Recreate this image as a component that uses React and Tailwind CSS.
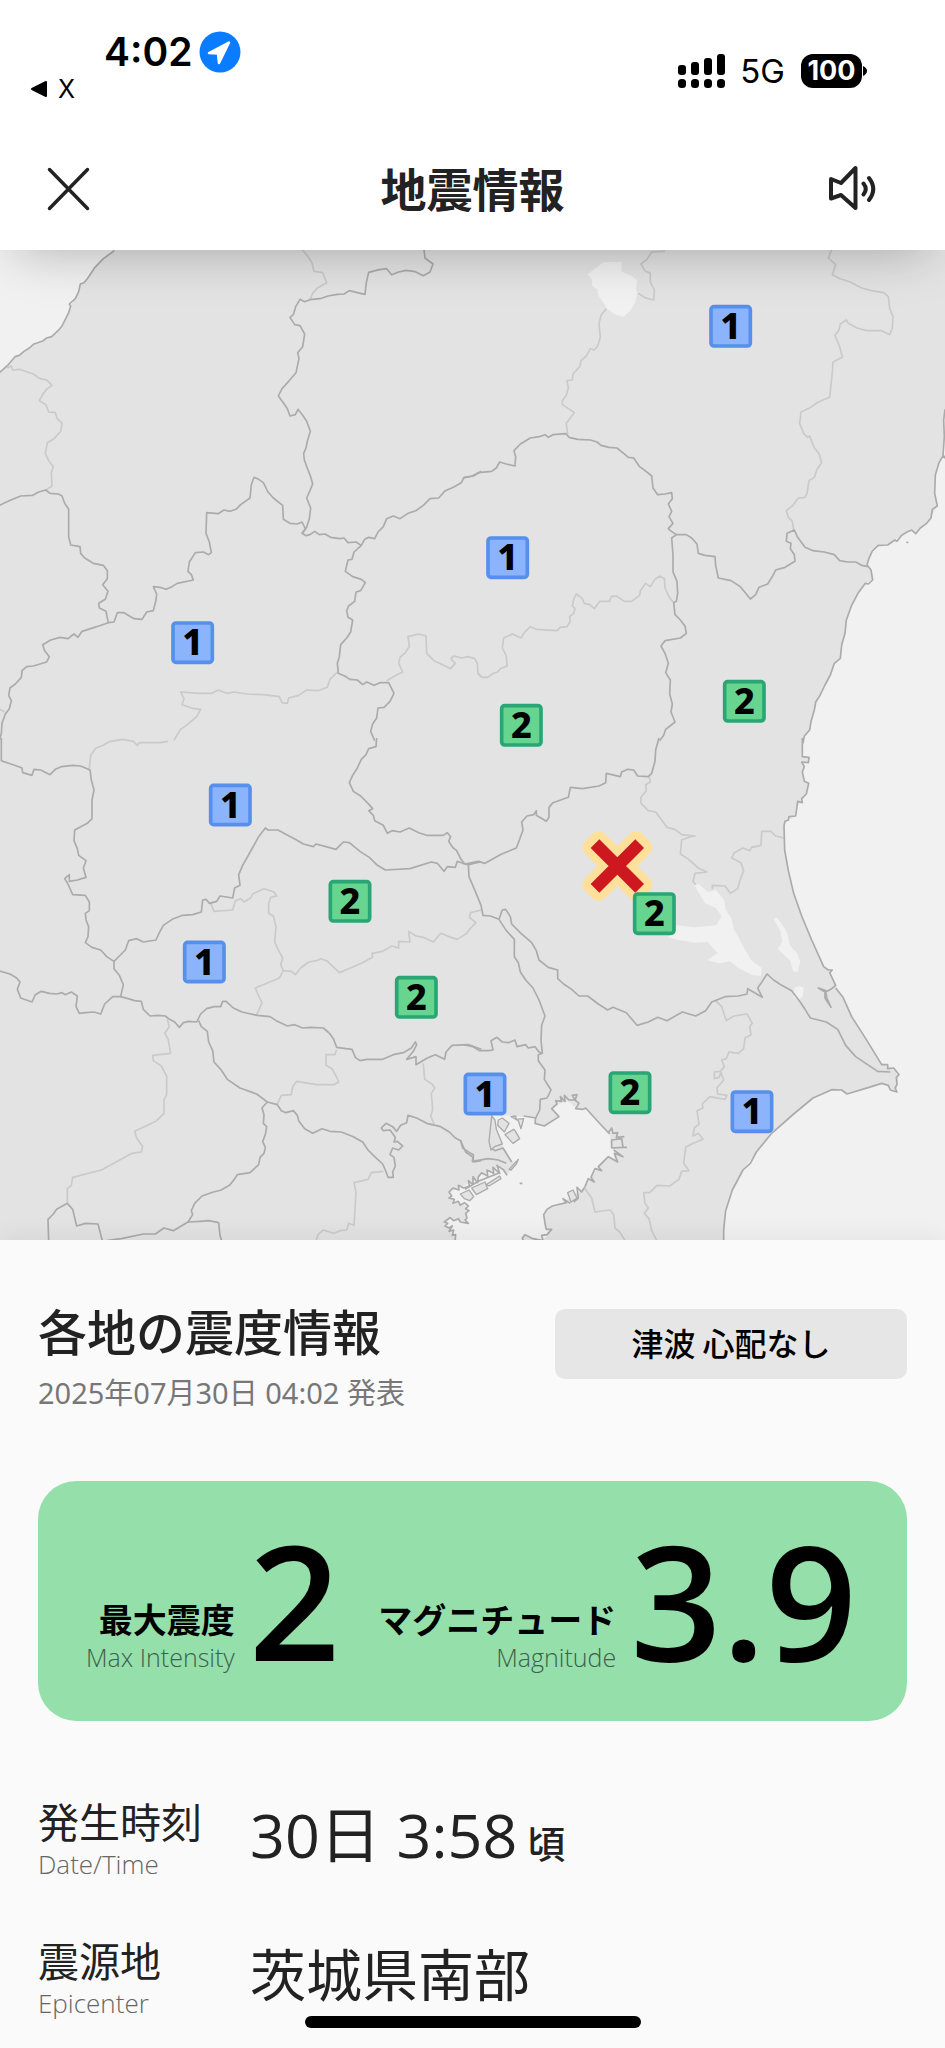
const JP = "font-['Noto_Sans_CJK_JP',sans-serif]";
const LATIN = "font-['Open_Sans','Noto_Sans_CJK_JP',sans-serif]";

/* Water areas, one list per quadrant of the map. */
const water = {
  nw: ["M-10 -10H360L343 32L310 56L285 82L262 116L241 132L236 155L212 198L196 238L178 268L155 290L128 303L100 313L72 334L45 350L22 377L-10 405Z"],
  ne: [
    "M1460 500L1437 540L1436 640L1422 668L1411 705L1409 760L1417 798L1402 824L1398 834L1384 851L1366 864L1352 881L1332 869L1310 886L1290 900L1268 915L1240 916L1222 933L1212 955L1208 980L1218 990L1223 1020L1201 1030L1180 1058L1160 1096L1144 1140L1140 1180L1130 1215L1126 1255L1108 1270L1096 1305L1080 1335L1064 1368L1048 1410L1038 1445L1034 1470L1018 1494L1014 1510H1460Z",
    "M368 103L416 66H470L469 94L498 107L517 121L513 146L517 160L510 188L495 213L476 230L452 224L427 208L414 186L399 165L397 148L382 139L380 118Z",
  ],
  se: [
    "M1014 -10L1012 50L1032 52L1030 68L1018 70L1012 96L1020 124L1031 130L1024 162L1006 186L996 200L992 228L972 238L957 256L959 330L970 392L986 460L1010 528L1040 600L1076 680L1090 688L1110 732L1150 810L1190 880L1248 968L1290 992L1300 1010L1294 1056L1276 1048L1256 1030L1212 1042L1146 1062L1130 1050L1100 1049L1044 1074L986 1122L920 1180L874 1236L834 1290L802 1350L782 1412L776 1470V1520H1460V-10Z",
    "M82 1124L150 1128L175 1130L212 1134L210 1150L238 1158L282 1130L260 1106L276 1092L310 1084L336 1108L362 1104L400 1146L434 1182L438 1222L452 1234L446 1256L426 1250L398 1284L376 1318L360 1340L310 1376L282 1396L248 1406L236 1424L240 1464L258 1474L232 1502L205 1498L176 1486L170 1510H-30L-30 1485L-50 1473L-40 1460L-55 1463L-62 1450L-45 1435L-15 1443L10 1450L2 1425L10 1410L-5 1390L-30 1387L-48 1370L-45 1355L-20 1345L20 1326L50 1306L84 1290L104 1276L126 1306L158 1262L140 1266L112 1216L104 1200L90 1160Z",
    "M688 436L700 432L730 456L752 450L778 480L782 510L800 536L806 566L830 610L858 660L890 684L888 708L860 704L820 684L794 664L764 670L726 660L758 640L728 606L690 608L640 600L608 592L634 556L688 562L754 556L770 528L752 504L720 490Z",
    "M926 536L936 532L956 560L968 582L974 616L996 640L1006 664L998 696L984 694L976 664L952 640L938 626L952 606L946 574Z",
    "M988 744L1004 738L1016 744L1014 768L1000 782L986 770Z",
  ],
  sw: [],
};

/* Reclaimed islands and piers inside the bay. */
const islands = [
  "M80 1128L72 1204L78 1230L88 1220L112 1212L94 1168L90 1140Z",
  "M100 1140L112 1134L132 1150L118 1176L98 1156Z",
  "M120 1184L146 1168L150 1172L164 1196L144 1210Z",
  "M138 1130L152 1128L154 1138L176 1136L168 1166L160 1142Z",
  "M20 1344L60 1326L68 1346L34 1364Z",
  "M64 1334L104 1308L108 1316L72 1338Z",
  "M-14 1362L12 1350L26 1370L14 1382L-2 1376Z",
  "M132 1288L160 1258L154 1272L138 1290Z",
  "M308 1358L324 1350L336 1374L318 1386Z",
];

/* Prefecture borders and coastlines. */
const borders = {
  nw: [
    "M343 32L310 56L285 82L270 104L262 116L252 128L241 132L236 155L226 176L208 192L212 198L206 218L196 238L186 258L178 268L155 290L140 294L128 303L100 313L88 324L72 334L58 346L45 350L22 377L-10 405",
    "M1272 30L1275 54L1299 72L1290 96L1270 107L1246 95L1218 91L1196 96L1175 104L1160 86L1138 89L1106 97L1099 128L1095 163L1072 158L1048 152L1032 162L1012 163L984 168L960 176L930 179L914 185L900 178L887 200L880 224L870 232L884 254L900 257L914 282L908 320L893 338L897 356L888 398L866 424L846 446L835 468L850 488L862 506L870 528L886 524L894 508L908 526L920 544L931 574L922 604L918 624L911 640L913 660L924 690L932 710L938 732L930 752L920 774L932 804L928 836L920 862L908 880",
    "M-4 797L24 784L62 768L98 766L116 756L137 750L150 760L176 762L186 768L194 790L206 808V890L212 915L240 920L242 940L254 954L280 970L310 976L322 992V1016L308 1034L324 1054L316 1078L296 1090L298 1104L318 1114L325 1148L342 1146L352 1118L372 1118L402 1136L426 1138L440 1116L460 1112L468 1080L470 1062L460 1040L480 1042L498 1048L516 1040L532 1030L580 1020L574 1004L564 994L568 966L586 938L610 936L626 944L634 938L628 906L618 880L620 818L654 821L672 810L690 814L708 808L722 794L750 774L754 734L762 712L776 718L790 728L804 756L820 774L848 796L850 838L870 850L892 852L906 846L916 866L906 880L918 887L930 884L944 874L958 884L975 882L992 892L1020 896L1032 894L1044 908L1068 906L1084 916L1094 898L1106 892L1124 896L1134 876L1150 860L1160 836L1180 828L1200 836L1224 820L1248 812L1270 796L1290 776L1316 774L1336 752L1360 742L1384 728L1392 712L1420 708L1444 694",
    "M325 1148L290 1160L246 1174L234 1192L222 1182L204 1196L180 1192L152 1200L128 1214L134 1232L148 1250L140 1266L100 1278L80 1280L66 1292L64 1312L46 1332L30 1344L26 1366L34 1382L28 1406L16 1422L6 1450L4 1480L-4 1510",
    "M1084 916L1062 936L1056 958L1044 960L1036 994L1058 1010L1084 1018L1096 1028L1082 1052L1068 1056L1064 1084L1046 1098L1040 1112L1044 1132L1058 1140L1052 1176L1040 1194L1022 1214L1018 1250L1012 1270L1015 1300L1034 1308L1050 1318L1072 1320L1088 1334L1100 1326L1122 1336L1140 1328L1166 1328L1182 1360L1170 1384L1152 1402L1134 1404L1130 1434L1118 1452L1112 1474L1124 1502",
  ],
  ne: [
    "M-4 714L22 708L40 698L80 694L94 684L104 666L124 672L150 678L152 650L147 632L166 612L196 594L222 590L240 584L250 592L264 584L303 581L312 592L338 598L376 600L396 606L408 616L432 622L456 624L476 640L490 652L506 654L524 680L548 698L560 708L564 744L578 764L600 762L620 758L622 776L610 792L620 814L612 830L624 850L610 866L616 872L634 884L620 894L624 944L624 996L636 1024L638 1060L634 1084L626 1088L630 1124L646 1140L660 1158L664 1180L646 1194L600 1202L588 1218L600 1240L610 1270L602 1298L616 1320L614 1362L622 1392L618 1416L630 1446L602 1468L596 1486L584 1502",
    "M634 884L664 884L680 894L696 912L700 940L720 946L750 950L752 976L760 1014L798 1022L826 1040L842 1060L856 1077L872 1064L882 1042L908 1032L924 1006L932 990L960 982L990 964L988 944L976 926L978 910L964 904L966 880L988 870L998 892L1020 922L1044 932L1078 936L1108 944L1124 962L1148 966L1172 966L1190 976L1208 980",
    "M1440 508L1436 540L1438 590L1434 645L1442 656M1436 645L1422 668L1411 705L1409 760L1417 798L1402 808L1398 834L1384 851L1366 864L1352 881L1340 870L1326 876L1310 886L1296 904L1290 900L1268 915L1240 916L1222 933L1212 955L1206 974L1218 990L1223 1020L1210 1032L1201 1030L1180 1058L1160 1096L1144 1140L1140 1180L1130 1215L1126 1255L1108 1270L1096 1305L1080 1335L1064 1368L1052 1386L1048 1410L1038 1445L1034 1470L1018 1488L1014 1510",
    "M1324 906L1330 908",
  ],
  sw: [
    "M4 -6V62L26 70L44 76L66 84L68 98L96 106L102 88L122 90L150 104L166 88L184 80L218 76L242 78L270 90L274 120L282 150L276 180L276 236L262 250L224 270L222 302L232 326L236 346L258 362L250 384L258 412L232 420L208 424L208 404L194 416L204 432L218 464L256 466L268 486L268 512L256 520L258 540L266 560L264 590L256 608L276 622L302 630L320 650L342 664L342 686L358 706L370 734L362 770L384 776L404 782L424 784L430 808L450 828L474 826L496 828L506 836L524 846L538 862L550 848L566 844L590 846L602 822L620 806L642 800L662 800L668 784L678 784L700 804L726 816L772 826L810 830L832 844L862 858L884 854L908 864L932 862L970 864L984 876L990 882L1000 896L1010 922L1038 926L1056 928L1066 952L1080 962L1100 958L1148 958L1180 944L1210 938L1234 924L1246 906L1250 914L1240 934L1220 958L1248 950V974L1282 954L1306 944L1334 958L1338 936L1356 916L1406 914L1444 928",
    "M-4 692L30 702L50 714L60 726L52 748L62 774L96 786L106 764L124 754L148 760L170 762L186 758L196 764L214 756L232 768L228 800L238 820L256 818L282 816L302 822L314 792L338 770L362 770",
    "M342 664L364 642L376 630L386 602L410 596L430 606L468 600L478 578L490 556L520 536L548 526L578 524L604 516L608 480L618 478L628 490L650 484L660 468L698 474L704 444L720 436L716 404L728 376L754 330L776 290L796 264L804 270L834 270L860 284L886 298L910 312L940 320L948 312L986 322L1008 328L1030 306L1048 308L1080 334L1108 352L1130 374L1156 390L1230 386L1294 366L1312 370L1332 394L1342 380L1366 382L1372 364L1388 370L1406 374L1440 366",
    "M1130 -6L1128 20L1106 26L1098 44L1084 58L1072 84L1058 106L1048 128L1060 154L1082 168L1104 190L1118 206L1106 212L1120 226L1124 242L1150 256L1162 280L1176 272L1200 276L1228 264L1256 278L1280 286L1330 286L1342 278L1352 290L1346 304L1358 322L1370 332L1382 356L1394 372",
    "M596 842L604 860L622 874L626 906L638 932L642 966L662 988L682 1018L720 1044L770 1062L802 1086L786 1104L792 1124L790 1150L800 1160L796 1184L788 1204L796 1222L792 1240L780 1252L776 1274L750 1298L712 1304L700 1322L688 1336L664 1350L640 1356L606 1368L584 1390L574 1412L578 1424L564 1446L520 1472L492 1464L466 1482L430 1482L364 1496L320 1502",
    "M564 1446L600 1444L626 1442L656 1448L660 1486L666 1506",
    "M802 1086L832 1094L844 1112L858 1118L880 1112L892 1126L896 1142L914 1166L938 1180L966 1166L990 1174L1024 1176L1060 1190L1088 1206L1104 1230L1124 1250L1148 1272L1156 1290L1164 1312H1180L1178 1296L1186 1278L1182 1252L1170 1244L1178 1224L1196 1230L1208 1218L1192 1204L1182 1206L1186 1192L1170 1170L1150 1172L1144 1164L1158 1150L1178 1160L1190 1174L1202 1156L1220 1148L1224 1126L1250 1134L1280 1150L1322 1160L1348 1176L1366 1194L1382 1202L1388 1224L1412 1240L1420 1244V1266L1444 1262",
    "M146 1504L144 1438L160 1422L170 1408L202 1390L218 1408L230 1458L256 1450L294 1452L308 1506",
  ],
  se: [
    "M582 -6L572 30L570 64L560 100L550 110L518 108L506 90L488 88L470 96L466 110L424 100L422 128L402 138L352 146L316 142L310 172L264 188L252 202V232L244 244L214 226V212L206 224L186 228L170 246L174 270L164 298L154 324L110 342L60 370L40 364L0 372M10 374L12 410L30 452L48 496L54 526L76 528L102 538L112 510L122 508L136 530L140 552L168 580L200 608L214 632L222 660L250 682L278 690V716L296 732L320 748L342 768L368 768L400 792L428 810L444 802L484 818L516 856L550 846L578 832L606 842L652 816L692 828L722 812L740 786L780 770L820 768L846 762L848 746L892 772L878 744L888 730L906 702L926 720L950 736L980 752L1004 784L1020 808L1036 834L1084 846L1118 868L1142 916L1172 950L1238 994L1276 996",
    "M102 538L124 572L148 598V650L160 668L166 696L182 720L204 744L222 780L240 828L230 856L228 900L232 940L220 944V962L240 990L238 1018L258 1050L246 1074L226 1078L224 1110L212 1134",
    "M-4 914L24 920L44 932H70L84 930L78 902L96 892L112 906L130 908L150 900L156 920L182 914L190 924L210 920L222 936L232 940",
    "M1012 -6V50L1032 52L1030 68L1010 66L1018 80L1012 96L1018 124L1031 130L1024 162L1010 176L1012 188L998 184L996 200L992 228L972 230L970 240L960 244L957 256L959 330L970 392L986 460L1010 528L1040 600L1076 680L1090 690L1102 690L1094 698L1112 736L1100 746L1082 756L1086 776L1098 802L1080 774V756L1060 744L1084 752M1112 744L1134 772L1160 830L1206 902L1250 974L1268 974V986L1286 984L1302 1004L1294 1012L1296 1034L1290 1044L1296 1056L1276 1050L1270 1036L1250 1030L1212 1042L1146 1062L1130 1050L1100 1049L1044 1074L986 1122L920 1180L874 1236L856 1270L834 1290L802 1350L782 1412L776 1470V1508",
    "M176 1128L212 1134L210 1150L238 1158L282 1130L260 1106L276 1092L272 1082L290 1084L286 1070L300 1084L298 1066L312 1080H330L322 1066L336 1064L330 1080L342 1090L332 1106L354 1108L362 1104L400 1146L434 1182M430 1178L440 1164L444 1180L458 1178L454 1192L478 1190M440 1200L470 1196L474 1222L440 1224ZM474 1222H486M446 1230L474 1250L448 1240L458 1266L430 1250L418 1262L400 1280L410 1292L390 1286L378 1312L388 1326L370 1316L360 1340",
    "M360 1340L350 1356L336 1342L340 1374L326 1386M316 1390L294 1376L304 1388L262 1398L246 1408L236 1424L240 1450L244 1468H260L246 1484L230 1486L234 1502L204 1496L180 1484L172 1494L176 1506M164 1330H172",
    "M78 1224L90 1232L114 1224L140 1266M126 1306L116 1290L96 1276L104 1300L84 1282L86 1300L66 1290L68 1308L50 1298L40 1310L38 1328L24 1310V1334L10 1322L14 1340M0 1348L40 1324L100 1300",
    "M-14 1200L2 1236L24 1252L22 1264L70 1256L100 1260L124 1270",
    "M14 1338L-4 1344L-20 1336L-18 1350L-36 1344L-48 1356L-40 1368L-48 1374L-32 1378L-36 1390L-20 1384L-14 1396L-2 1388L10 1398L2 1406L12 1412L2 1420L6 1434L0 1440L10 1450L-14 1446L-20 1436L-34 1442L-45 1433L-62 1446L-52 1450L-60 1458L-48 1464L-38 1458L-48 1474L-34 1470L-38 1486L-28 1484L-30 1508",
  ],
};

/* Boundaries between forecast areas inside a prefecture. */
const districts = {
  nw: [
    "M906 28L924 50L936 68L942 94L968 98L980 128L952 144L938 160L930 179",
    "M22 384L34 378L38 390L58 388L100 402L120 416L140 420L156 436L142 446L130 460L118 482L138 494L146 516L166 518L172 536L186 550L182 574L162 596L142 608L136 640L146 662L160 680L154 698L156 738L137 750",
    "M1012 1296L990 1318L982 1342L954 1352L920 1350L896 1366L866 1374L862 1390L846 1388L838 1370L790 1364L740 1362L702 1356L680 1360L654 1350L636 1360L600 1360L542 1356L552 1376L546 1394L582 1406L602 1408L590 1430L562 1454L542 1468L522 1500",
    "M1160 1322L1184 1308L1208 1296L1196 1270L1200 1252L1216 1238L1228 1218L1224 1190L1256 1182L1278 1188L1280 1240L1302 1262L1328 1274L1352 1286L1366 1270L1352 1256L1362 1248L1386 1254L1404 1250L1424 1256L1432 1270L1434 1300L1446 1312",
    "M-4 1406L14 1416",
  ],
  ne: [
    "M600 34L560 36L546 58L528 72L540 92L556 100L556 126L568 150L566 180L542 174L520 160",
    "M424 206L408 226L402 250L406 292L398 318L388 330L376 326L364 348L348 362L344 380L324 402L322 420L306 422L310 444L304 466L292 482L292 494L314 508L328 518L316 534L304 550L308 582",
    "M1100 30L1090 54L1112 74L1102 104L1126 116L1156 126L1190 144L1220 152L1256 158L1270 170L1274 206L1284 230L1282 264L1274 284L1250 272L1206 272L1176 264L1150 250L1144 240L1126 252L1122 270L1110 286L1124 320L1132 352L1104 366L1102 396L1094 472L1060 486L1034 504L1008 516L1004 550L1016 580L1028 592L1034 588L1048 624L1062 640L1070 668L1056 688L1048 712L1032 722L1026 760L1020 772L1000 774L984 796L964 812L970 832L982 844L986 870",
    "M50 1312H68L84 1300L98 1296L106 1286L126 1278L124 1248L112 1224L116 1194L142 1182L168 1194L178 1178L196 1160L214 1168L276 1172L286 1162L306 1160L316 1144L314 1130L326 1120L330 1106L322 1098L326 1078L334 1062L352 1076L358 1090L374 1094L388 1106L404 1084H434L438 1070L454 1068L478 1084H500L524 1066L526 1052L542 1030L556 1040L570 1018L584 1008L598 1016L600 1044L612 1070L626 1088M50 1312L39 1300",
  ],
  sw: [
    "M504 4L480 8L418 8L412 16L400 4L370 -2L330 4L310 16L288 24L272 46L268 88",
    "M632 490L642 514L698 510L706 482L722 476L732 486L752 474L758 462L792 446L822 456L830 468L812 472L806 490L806 520L820 528L828 560L824 606L834 628L848 654L842 674L850 692L838 714L766 744L776 768L786 788L776 812L770 824",
    "M850 692L874 694L886 704L902 684L926 666L950 662L962 656L980 662L1018 698L1046 686L1084 670L1118 652L1116 640L1148 634L1176 618L1196 624V604L1230 606L1226 574L1248 588L1270 592L1300 606L1322 580L1352 592L1372 598L1400 580L1412 564L1428 548L1408 532L1412 518L1444 510",
    "M502 838L508 860L494 880L504 896L512 940L458 946L460 962L484 978L500 1008L500 1064L492 1080V1120L470 1142L446 1154L404 1174L410 1194L428 1220L424 1236L396 1240L344 1268L304 1290L218 1312L214 1336L202 1346V1388",
    "M1010 930L1004 944L978 944V976L996 986L1008 1008L1016 1026L1002 1034L950 1034L890 1024L878 1040L874 1064L844 1066L832 1092",
    "M1270 970L1274 1018L1296 1032L1304 1044L1294 1060L1298 1110L1292 1128L1302 1152",
    "M1150 1294L1114 1298L1104 1318L1062 1328L1068 1358L1062 1456L1046 1450L1040 1470L1020 1472L1002 1480L970 1470L954 1484L948 1504",
  ],
  se: [
    "M552 108L556 126L542 134L544 152L528 172V190L550 212L572 216L590 240L606 262L630 268L650 284L690 288L676 290L650 300L646 342L668 356L700 384L726 396L690 400L684 424L692 434",
    "M956 294L932 288L918 274H890L888 316L860 322L854 332L834 324L808 338L800 354L828 368L836 392L824 424L818 446L796 460L780 438L742 436V448",
    "M752 782L770 800L784 842L806 828L846 822L862 850L854 860L858 884L840 894L836 926L820 940L792 936L784 956L770 960L778 980L766 994L748 996V1016L762 1012L768 998L776 1020L756 1044L758 1062L786 1066L780 1078L734 1070L712 1092L714 1104L696 1112L702 1152L688 1164L684 1188L700 1180L714 1198L680 1212L662 1222L656 1270L672 1292L650 1294L642 1318L614 1338L576 1336L554 1358H536L540 1390L550 1404L538 1420L552 1436L560 1472L576 1502",
    "M360 1346L380 1374L390 1416L436 1410L446 1424L450 1464L464 1476L482 1504",
  ],
};

const quadrants = [
  ["nw", "translate(0 -30)"],
  ["ne", "translate(1395 -30)"],
  ["sw", "translate(0 1470)"],
  ["se", "translate(1395 1470)"],
];

const markers = [
  { level: 1, x: 2192, y: 229 },
  { level: 1, x: 1523, y: 923 },
  { level: 1, x: 578, y: 1178 },
  { level: 2, x: 2233, y: 1354 },
  { level: 2, x: 1564, y: 1426 },
  { level: 1, x: 691, y: 1665 },
  { level: 2, x: 1050, y: 1954 },
  { level: 2, x: 1963, y: 1991 },
  { level: 1, x: 613, y: 2136 },
  { level: 2, x: 1249, y: 2242 },
  { level: 1, x: 1455, y: 2532 },
  { level: 2, x: 1890, y: 2528 },
  { level: 1, x: 2256, y: 2585 },
];

function IntensityMarker({ level, x, y }) {
  const tone = level === 1 ? "fill-[#8bb4fd] stroke-[#5690ec]" : "fill-[#67d58f] stroke-[#2aa676]";
  return (
    <g transform={`translate(${x} ${y})`}>
      <rect x="-59" y="-59" width="118" height="118" rx="9" strokeWidth="11" className={tone} />
      <text y="38" textAnchor="middle" className="fill-black font-['Noto_Sans',sans-serif] text-[108px] font-extrabold">
        {level}
      </text>
    </g>
  );
}

function IntensityMap() {
  return (
    <svg viewBox="0 0 2835 2970" role="img" aria-label="震度マップ" className="block w-full bg-[#e3e3e3]">
      {quadrants.map(([id, move]) => (
        <g key={id} transform={move} className="fill-[#f1f1f1]">
          {water[id].map((d) => <path key={d} d={d} />)}
        </g>
      ))}
      {quadrants.map(([id, move]) => (
        <g key={id} transform={move} fill="none" strokeLinejoin="round">
          <g strokeWidth="5" className="stroke-[#cacaca]">
            {districts[id].map((d) => <path key={d} d={d} />)}
          </g>
          <g strokeWidth="5" className="stroke-[#ababab]">
            {borders[id].map((d) => <path key={d} d={d} />)}
          </g>
        </g>
      ))}
      <g transform="translate(1395 1470)" strokeWidth="4" strokeLinejoin="round" className="fill-[#e3e3e3] stroke-[#ababab]">
        {islands.map((d) => <path key={d} d={d} />)}
      </g>
      <g transform="translate(1852 1848)">
        <path
          d="M-56 -80L0 -24L56 -80L80 -56L24 0L80 56L56 80L0 24L-56 80L-80 56L-24 0L-80 -56Z"
          strokeWidth="50"
          strokeLinejoin="round"
          className="fill-[#ffe09a] stroke-[#ffe09a]"
        />
        <path d="M-67 -67L67 67M67 -67L-67 67" strokeWidth="37" className="stroke-[#cd1820]" />
      </g>
      {markers.map((m) => <IntensityMarker key={`${m.x}-${m.y}`} {...m} />)}
    </svg>
  );
}

function StatusBar() {
  return (
    <div className="flex h-[112px] items-start justify-between pt-[31px] pr-[78px] pl-[30px] font-['Inter',sans-serif] text-black">
      <div>
        <div className="flex items-center gap-[7px] pl-[74px]">
          <span className="text-[39px] leading-[42px] font-semibold">4:02</span>
          <svg viewBox="0 0 42 42" className="size-[42px]" aria-hidden="true">
            <circle cx="21" cy="21" r="20.5" className="fill-[#0a7cff]" />
            <path d="M10 22L30 11.5L20 32L19 22.500Z" strokeWidth="2.500" strokeLinejoin="round" className="fill-white stroke-white" />
          </svg>
        </div>
        <a href="#back" className="flex items-center gap-[10px] text-[25px] leading-[32px]">
          <svg viewBox="0 0 18 18" className="size-[18px]" aria-hidden="true">
            <path d="M2 9L16 2V16Z" strokeWidth="2" strokeLinejoin="round" className="fill-black stroke-black" />
          </svg>
          X
        </a>
      </div>
      <div className="flex items-center pt-[23px]">
        <svg viewBox="0 0 48 34" className="h-[34px] w-[48px]" aria-hidden="true">
          <rect x="0" y="11" width="8" height="10" rx="3" />
          <rect x="13" y="8" width="8" height="13" rx="3" />
          <rect x="26" y="4" width="8" height="17" rx="3" />
          <rect x="39" y="0" width="8" height="21" rx="3" />
          <rect x="0" y="25" width="8" height="9" rx="3.500" />
          <rect x="13" y="25" width="8" height="9" rx="3.500" />
          <rect x="26" y="25" width="8" height="9" rx="3.500" />
          <rect x="39" y="25" width="8" height="9" rx="3.500" />
        </svg>
        <span className="ml-[14px] text-[33px] leading-[34px]">5G</span>
        <span className="ml-[16px] flex h-[34px] w-[61px] items-center justify-center rounded-[12px] bg-black text-[27px] leading-[34px] font-bold text-white">
          100
        </span>
        <svg viewBox="0 0 4 10" className="ml-[1px] h-[10px] w-[4px]" aria-hidden="true">
          <path d="M0 0Q4 2 4 5T0 10Z" />
        </svg>
      </div>
    </div>
  );
}

function AppBar() {
  return (
    <div className="grid grid-cols-[1fr_auto_1fr] items-center pt-[50px] pr-[68px] pb-[34px] pl-[44px] text-[#222]">
      <button type="button" aria-label="閉じる" className="size-[50px]">
        <svg viewBox="0 0 50 50" className="size-full" fill="none" stroke="currentColor" strokeWidth="3.500" strokeLinecap="round" aria-hidden="true">
          <path d="M5.500 5.500L43.500 44.500M43.500 5.500L5.500 44.500" />
        </svg>
      </button>
      <h1 className={`${JP} pb-[4px] pl-[24px] text-[46px] leading-[50px] font-bold`}>地震情報</h1>
      <button type="button" aria-label="音声" className="size-[50px] justify-self-end">
        <svg viewBox="0 0 50 50" className="size-full" fill="none" stroke="currentColor" strokeWidth="4" strokeLinecap="round" strokeLinejoin="round" aria-hidden="true">
          <path d="M4 15L14 19L28.500 4V44L14 31L4 34.500Z" />
          <path d="M36.500 19.500Q41 25 36.500 30.500M42 14Q50.500 25 42 36" />
        </svg>
      </button>
    </div>
  );
}

function Reading({ label, sub, value }) {
  return (
    <div className="flex items-end gap-[14px]">
      <div className="pb-[7px] text-right">
        <p className={`${JP} text-[34px] leading-[46px] font-bold whitespace-nowrap text-black`}>{label}</p>
        <p className={`${LATIN} text-[25px] leading-[30px] font-light whitespace-nowrap text-[#40604b]`}>{sub}</p>
      </div>
      <p className={`${LATIN} text-[160px] leading-[160px] font-semibold text-black`}>{value}</p>
    </div>
  );
}

function DetailRow({ label, sub, children }) {
  return (
    <div className="flex items-center">
      <dt className="w-[212px] shrink-0">
        <span className={`${JP} block text-[41px] leading-[50px]`}>{label}</span>
        <span className={`${LATIN} mt-[3px] block text-[26px] leading-[32px] font-light text-[#666]`}>{sub}</span>
      </dt>
      <dd className={`${LATIN} pt-[12px] leading-[60px]`}>{children}</dd>
    </div>
  );
}

export default function App() {
  return (
    <div className="relative flex min-h-screen flex-col bg-white">
      <header className="relative z-10 bg-white shadow-[0_16px_50px_-16px_rgba(0,0,0,0.28)]">
        <StatusBar />
        <AppBar />
      </header>
      <IntensityMap />
      <main className="relative flex-1 bg-[#fafafa] px-[38px] pt-[65px] text-[#222] shadow-[0_-4px_24px_rgba(0,0,0,0.06)]">
        <div className="flex items-start justify-between">
          <div>
            <h2 className={`${JP} text-[49px] leading-[50px] font-medium`}>各地の震度情報</h2>
            <p className="mt-[18px] font-['Noto_Sans','Noto_Sans_CJK_JP',sans-serif] text-[29px] leading-[40px] text-[#777]">2025年07月30日 04:02 発表</p>
          </div>
          <button type="button" className={`${JP} mt-[4px] h-[70px] w-[352px] rounded-[10px] bg-[#e6e6e6] pb-1 text-[32px] font-medium text-black`}>
            津波 心配なし
          </button>
        </div>
        <section className="mt-[68px] flex h-[240px] items-end justify-between rounded-[38px] bg-[#95dfaa] pr-[50px] pb-[42px] pl-[48px]">
          <Reading label="最大震度" sub="Max Intensity" value="2" />
          <Reading label="マグニチュード" sub="Magnitude" value="3.9" />
        </section>
        <dl className="mt-[72px] flex flex-col gap-[50px]">
          <DetailRow label="発生時刻" sub="Date/Time">
            <span className="text-[61px]">30日 3:58</span>
            <span className="ml-[10px] text-[38px] font-medium">頃</span>
          </DetailRow>
          <DetailRow label="震源地" sub="Epicenter">
            <span className="text-[56px]">茨城県南部</span>
          </DetailRow>
        </dl>
      </main>
      <div className="fixed bottom-5 left-1/2 h-[12px] w-[336px] -translate-x-1/2 rounded-full bg-black" />
    </div>
  );
}
